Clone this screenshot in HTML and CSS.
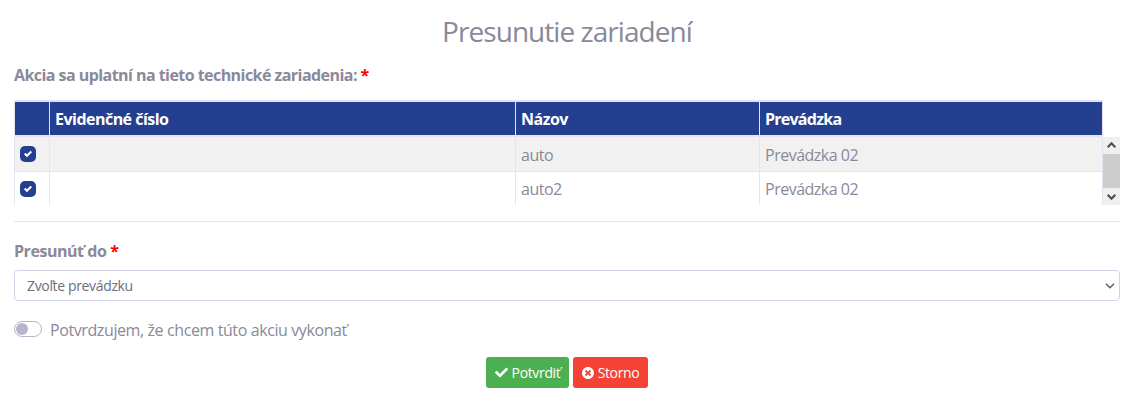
FILE: index.html
```html
<!DOCTYPE html>
<html lang="sk">
<head>
    <meta charset="UTF-8">
    <meta name="viewport" content="width=device-width, initial-scale=1.0">
    <title>Presunutie zariadení</title>
    <link rel="stylesheet" href="styles.css">
</head>
<body>

<form class="transfer">
    <h3 class="title">Presunutie zariadení</h3>

    <p class="label devices-label">Akcia sa uplatní na tieto technické zariadenia: <span class="required">*</span></p>

    <table class="devices devices-head">
        <colgroup>
            <col class="col-check">
            <col class="col-number">
            <col class="col-name">
            <col class="col-place">
        </colgroup>
        <thead>
        <tr>
            <th></th>
            <th>Evidenčné číslo</th>
            <th>Názov</th>
            <th>Prevádzka</th>
        </tr>
        </thead>
    </table>
    <div class="devices-scroll">
        <table class="devices devices-body">
            <colgroup>
                <col class="col-check">
                <col class="col-number">
                <col class="col-name">
                <col class="col-place">
            </colgroup>
            <tbody>
            <tr>
                <td><span class="checkbox"><svg width="8" height="8" viewBox="0 0 8 8"><path fill="#fff" d="M6.564.75l-3.59 3.612-1.538-1.55L0 4.26 2.974 7.25 8 2.193z"/></svg></span></td>
                <td></td>
                <td class="first-text">auto</td>
                <td class="first-text">Prevádzka 02</td>
            </tr>
            <tr>
                <td><span class="checkbox"><svg width="8" height="8" viewBox="0 0 8 8"><path fill="#fff" d="M6.564.75l-3.59 3.612-1.538-1.55L0 4.26 2.974 7.25 8 2.193z"/></svg></span></td>
                <td></td>
                <td>auto2</td>
                <td>Prevádzka 02</td>
            </tr>
            </tbody>
        </table>
        <div class="scrollbar">
            <span class="scroll-btn"><svg width="17" height="17" viewBox="0 0 17 17"><path d="M4.700 10.200l3.800-3.900 3.800 3.900" fill="none" stroke="#505050" stroke-width="2.200"/></svg></span>
            <span class="scroll-thumb"></span>
            <span class="scroll-btn"><svg width="17" height="17" viewBox="0 0 17 17"><path d="M4.700 6.800l3.800 3.900 3.800-3.900" fill="none" stroke="#505050" stroke-width="2.200"/></svg></span>
        </div>
    </div>

    <hr class="divider">

    <label class="label target-label" for="target">Presunúť do <span class="required">*</span></label>
    <div class="select-wrap">
        <select class="select" id="target">
            <option>Zvoľte prevádzku</option>
        </select>
        <svg class="select-arrow" width="10" height="6" viewBox="0 0 10 6"><path d="M1 .8l4 4 4-4" fill="none" stroke="#5c5c68" stroke-width="1.4"/></svg>
    </div>

    <div class="confirm">
        <span class="switch"></span>
        <span class="confirm-text">Potvrdzujem, že chcem túto akciu vykonať</span>
    </div>

    <div class="buttons">
        <button type="button" class="btn btn-success"><svg width="13" height="13" viewBox="0 0 512 512"><path fill="#fff" d="M173.898 439.404l-166.4-166.4c-9.997-9.997-9.997-26.206 0-36.204l36.203-36.204c9.997-9.998 26.207-9.998 36.204 0L192 312.690 432.095 72.596c9.997-9.997 26.207-9.997 36.204 0l36.203 36.204c9.997 9.997 9.997 26.206 0 36.204l-294.400 294.401c-9.998 9.997-26.207 9.997-36.204-.001z"/></svg><span class="btn-text">Potvrdiť</span></button>
        <button type="button" class="btn btn-danger"><svg width="12" height="12" viewBox="8 8 496 496"><path fill="#fff" d="M256 8C119 8 8 119 8 256s111 248 248 248 248-111 248-248S393 8 256 8zm121.600 313.100c4.700 4.700 4.700 12.300 0 17L338 377.600c-4.700 4.700-12.300 4.700-17 0L256 312l-65.100 65.600c-4.700 4.700-12.300 4.700-17 0L134.400 338c-4.700-4.700-4.700-12.300 0-17l65.600-65-65.600-65.100c-4.700-4.700-4.700-12.300 0-17l39.600-39.600c4.700-4.700 12.300-4.700 17 0l65 65.700 65.100-65.600c4.700-4.700 12.300-4.700 17 0l39.600 39.600c4.700 4.700 4.700 12.300 0 17L312 256l65.600 65.100z"/></svg><span class="btn-text">Storno</span></button>
    </div>
</form>

</body>
</html>
```
FILE: styles.css
```css
* {
    box-sizing: border-box;
}

body {
    margin: 0;
    background-color: #fff;
    color: #898999;
    font-family: "Segoe UI", "Open Sans", "Noto Sans", sans-serif;
    font-size: 16px;
    line-height: 24px;
    letter-spacing: -0.4px;
}

.transfer {
    padding: 14px 15px 0 14px;
}

.title {
    margin: 0 0 15px;
    font-size: 28px;
    font-weight: 400;
    line-height: 34px;
    text-align: center;
    letter-spacing: -0.95px;
}

.label {
    display: block;
    margin: 0;
    font-weight: 700;
    letter-spacing: -0.45px;
}

.devices-label {
    margin-bottom: 13px;
    letter-spacing: -0.55px;
}

.required {
    color: #f00;
}

.devices {
    width: 1089px;
    table-layout: fixed;
    border-spacing: 0;
    border-left: 1px solid #e4e4f0;
}

.col-check {
    width: 35px;
}

.col-number {
    width: 466px;
}

.col-name {
    width: 244px;
}

.col-place {
    width: 343px;
}

.devices th,
.devices td {
    padding: 0 5px;
    text-align: left;
    border-right: 1px solid #e4e4f0;
}

.devices th {
    height: 37px;
    color: #fff;
    background-color: #243f8f;
    border-top: 2px solid #e0e4f2;
    border-bottom: 2px solid #e4e4f0;
    letter-spacing: -0.52px;
}

.devices th:last-child {
    letter-spacing: -0.75px;
}

.devices td {
    height: 35px;
    border-bottom: 1px solid #e4e4f0;
    letter-spacing: -0.5px;
}

.devices td.first-text {
    padding-top: 2px;
}

.devices tr:nth-child(odd) td {
    background-color: #f1f1f1;
}

.devices-scroll {
    display: flex;
    height: 68px;
    overflow: hidden;
}

.checkbox {
    display: flex;
    align-items: center;
    justify-content: center;
    width: 16px;
    height: 16px;
    border-radius: 5px;
    background-color: #243f8f;
}

.scrollbar {
    display: flex;
    flex-direction: column;
    width: 17px;
    background-color: #f0f0f0;
}

.scroll-btn {
    height: 17px;
}

.scroll-btn svg {
    display: block;
}

.scroll-thumb {
    height: 34px;
    background-color: #cdcdcd;
}

.divider {
    margin: 16px 0 17px;
    border: 0;
    border-top: 1px solid #e3e3e8;
}

.target-label {
    margin-bottom: 7px;
}

.select-wrap {
    position: relative;
}

.select {
    display: block;
    width: 100%;
    height: 31px;
    padding: 0 12px;
    appearance: none;
    color: #6e6e7c;
    background-color: #fff;
    border: 1px solid #d1d1e4;
    border-radius: 4px;
    font-family: inherit;
    font-size: 14px;
    letter-spacing: -0.35px;
}

.select-arrow {
    position: absolute;
    top: 13px;
    right: 5px;
}

.confirm {
    display: flex;
    align-items: center;
    gap: 8px;
    margin-top: 17px;
}

.switch {
    width: 28px;
    height: 16px;
    padding: 1px;
    margin-bottom: 2px;
    border: 1px solid #b5b5cb;
    border-radius: 8px;
}

.switch::before {
    content: "";
    display: block;
    width: 12px;
    height: 12px;
    border-radius: 50%;
    background-color: #b5b5cb;
}

.buttons {
    display: flex;
    justify-content: center;
    gap: 4px;
    margin-top: 15px;
}

.btn {
    display: flex;
    align-items: center;
    justify-content: center;
    gap: 4px;
    height: 31px;
    padding: 0;
    color: #fff;
    border: 0;
    border-radius: 3px;
    font-family: inherit;
    font-size: 14px;
    letter-spacing: -0.35px;
}

.btn-success {
    width: 83px;
    background-color: #4caf50;
}

.btn-danger {
    width: 75px;
    background-color: #f44336;
}
```
